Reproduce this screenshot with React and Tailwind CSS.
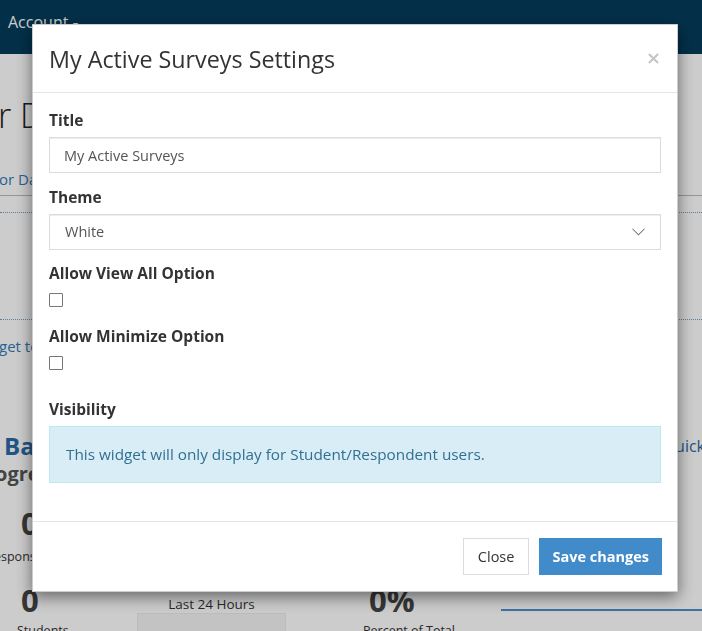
import { useState } from "react";

const font = { fontFamily: '"Open Sans", "Noto Sans", sans-serif' };

const Field = ({ label, children }) => (
  <div className="flex flex-col">
    <label className="text-[15.5px] font-bold leading-[21px] text-[#333] mb-[6px]">{label}</label>
    {children}
  </div>
);

const Check = ({ checked, onChange }) => (
  <button
    type="button"
    onClick={onChange}
    className="mt-[3px] w-[14px] h-[14px] border border-[#767676] rounded-[1px] bg-white flex items-center justify-center"
  >
    {checked && (
      <svg viewBox="0 0 12 12" className="w-[10px] h-[10px]">
        <path d="M2 6.5l2.5 2.5L10 3" fill="none" stroke="#333" strokeWidth="1.8" />
      </svg>
    )}
  </button>
);

const Background = () => (
  <div className="min-h-[631px] bg-white overflow-hidden">
    <div className="h-[54px] bg-[#043c5b] flex items-start pt-[10px] px-[8px]">
      <span className="text-white text-[16px] leading-[24px]">
        Account <span className="text-[10px] align-middle">▾</span>
      </span>
    </div>
    <div className="pt-[38px]">
      <h1 className="-ml-[22px] text-[34px] leading-[46px] font-light text-[#222] whitespace-nowrap">or Dashboard</h1>
      <div className="mt-[30px] -ml-[1px] text-[#337ab7] text-[15px] leading-[22px] whitespace-nowrap">or Dashboard</div>
      <div className="mt-[5px] border-t border-[#bbb]" />
      <div className="mt-[16px] border-t border-dotted border-[#7a9bb8]" />
      <div className="h-[106px]" />
      <div className="border-t border-dotted border-[#7a9bb8]" />
      <div className="mt-[15px] -ml-[1px] text-[#337ab7] text-[15px] leading-[22px] whitespace-nowrap">get to add</div>
      <div className="mt-[73px] flex justify-between items-center whitespace-nowrap">
        <span className="ml-[4px] text-[#2a6aa6] text-[24px] font-bold leading-[32px]">Back</span>
        <span className="-mr-[3px] text-[#2a6aa6] text-[16px] leading-[22px]">Quick</span>
      </div>
      <div className="-ml-[5px] text-[#555] text-[20px] font-bold leading-[24px] whitespace-nowrap">ogress</div>
      <div className="mt-[15px] ml-[21px] text-[#444] text-[31px] font-bold leading-[44px]">0</div>
      <div className="mt-[3px] -ml-[6px] text-[#333] text-[12.5px] leading-[18px] whitespace-nowrap">esponses</div>
      <div className="mt-[12px] flex items-start">
        <div className="w-[137px] pl-[21px] flex flex-col">
          <span className="text-[#444] text-[31px] font-bold leading-[44px]">0</span>
          <span className="-ml-[4px] text-[#333] text-[12.5px] leading-[18px] whitespace-nowrap">Students</span>
        </div>
        <div className="w-[149px] flex flex-col items-center pt-[17px]">
          <span className="text-[#333] text-[13.5px] leading-[18px]">Last 24 Hours</span>
          <div className="w-full h-[40px] bg-[#f4f4f4] border border-[#ebebeb]" />
        </div>
        <div className="w-[215px] pl-[83px] flex flex-col">
          <span className="text-[#444] text-[31px] font-bold leading-[44px]">0%</span>
          <span className="-ml-[6px] text-[#333] text-[12.5px] leading-[18px] whitespace-nowrap">Percent of Total</span>
        </div>
        <div className="flex-1 mt-[31px] border-t-2 border-[#4d8fcf]" />
      </div>
    </div>
  </div>
);

export default function App() {
  const [title, setTitle] = useState("My Active Surveys");
  const [theme, setTheme] = useState("White");
  const [viewAll, setViewAll] = useState(false);
  const [minimize, setMinimize] = useState(false);

  return (
    <div style={font} className="relative w-[702px] h-[631px] overflow-hidden">
      <Background />
      <div className="fixed inset-0 bg-black/20" />
      <div className="fixed left-[32px] top-[24px] w-[646px] bg-white border border-black/20 shadow-[0_5px_15px_rgba(0,0,0,0.5)]">
        <div className="h-[68px] flex items-center justify-between px-[16px] border-b border-[#e5e5e5]">
          <h4 className="text-[23.3px] text-[#333] leading-[30px]">My Active Surveys Settings</h4>
          <button type="button" className="mr-[2px] w-[12px] h-[12px] flex items-center justify-center">
            <svg viewBox="0 0 12 12" className="w-[11px] h-[11px]">
              <path d="M1 1L11 11M11 1L1 11" stroke="#c6c6c6" strokeWidth="2.4" />
            </svg>
          </button>
        </div>
        <div className="px-[16px] pt-[17px] pb-[38px] flex flex-col">
          <Field label="Title">
            <input
              value={title}
              onChange={(e) => setTitle(e.target.value)}
              className="h-[36px] px-[14px] border border-[#dcdcdc] shadow-[inset_0_1px_1px_rgba(0,0,0,0.075)] text-[14.5px] text-[#555] outline-none"
            />
          </Field>
          <div className="h-[14px]" />
          <Field label="Theme">
            <div className="relative">
              <select
                value={theme}
                onChange={(e) => setTheme(e.target.value)}
                className="w-full h-[36px] pl-[15px] appearance-none bg-white border border-[#dcdcdc] shadow-[inset_0_1px_1px_rgba(0,0,0,0.075)] text-[14.5px] text-[#555] outline-none"
              >
                <option>White</option>
                <option>Dark</option>
              </select>
              <svg viewBox="0 0 14 8" className="absolute right-[16px] top-[14px] w-[13px] h-[8px] pointer-events-none">
                <path d="M0.5 0.5L7 7L13.5 0.5" fill="none" stroke="#6f6f6f" strokeWidth="1.1" />
              </svg>
            </div>
          </Field>
          <div className="h-[13px]" />
          <Field label="Allow View All Option">
            <Check checked={viewAll} onChange={() => setViewAll(!viewAll)} />
          </Field>
          <div className="h-[19px]" />
          <Field label="Allow Minimize Option">
            <Check checked={minimize} onChange={() => setMinimize(!minimize)} />
          </Field>
          <div className="h-[29px]" />
          <Field label="Visibility">
            <div className="h-[57px] flex items-center px-[16px] bg-[#d9edf7] border border-[#bce8f1] text-[#31708f] text-[15.3px]">
              This widget will only display for Student/Respondent users.
            </div>
          </Field>
        </div>
        <div className="h-[70px] flex items-center justify-end gap-[10px] px-[15px] border-t border-[#e5e5e5]">
          <button type="button" className="h-[37px] px-[14px] border border-[#dcdcdc] bg-white text-[14.5px] text-[#333]">
            Close
          </button>
          <button type="button" className="h-[37px] px-[13px] bg-[#428bca] text-[14.5px] font-bold text-white">
            Save changes
          </button>
        </div>
      </div>
    </div>
  );
}
